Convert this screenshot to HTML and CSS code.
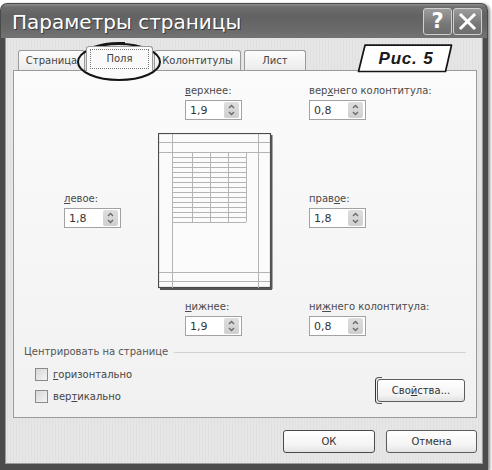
FILE: index.html
```html
<!DOCTYPE html>
<html lang="ru">
<head>
<meta charset="utf-8">
<title>Параметры страницы</title>
<link rel="stylesheet" href="styles.css">
</head>
<body>
<div class="window">
  <div class="titlebar">
    <span class="title">Параметры страницы</span>
    <div class="tb-buttons">
      <span class="tb-btn help">?</span>
      <span class="tb-btn close"><svg width="19" height="19" viewBox="0 0 19 19"><path d="M3 3 L16 16 M16 3 L3 16" stroke="#fff" stroke-width="3" stroke-linecap="square"/></svg></span>
    </div>
  </div>
  <div class="client">
    <div class="tabs">
      <div class="tab">Страница</div>
      <div class="tab active"><span class="focus">Поля</span></div>
      <div class="tab wide">Колонтитулы</div>
      <div class="tab last">Лист</div>
    </div>
    <div class="panel">
      <div class="margins">
        <div class="field f-top">
          <div class="label"><u>в</u>ерхнее:</div>
          <div class="spin"><span class="val">1,9</span><span class="arrows"><svg width="15" height="16" viewBox="0 0 15 16"><path d="M5 6 L7.5 3.5 L10 6 M5 10 L7.5 12.5 L10 10" fill="none" stroke="#6a6a6a" stroke-width="1.4"/></svg></span></div>
        </div>
        <div class="field f-header">
          <div class="label">вер<u>х</u>него колонтитула:</div>
          <div class="spin"><span class="val">0,8</span><span class="arrows"><svg width="15" height="16" viewBox="0 0 15 16"><path d="M5 6 L7.5 3.5 L10 6 M5 10 L7.5 12.5 L10 10" fill="none" stroke="#6a6a6a" stroke-width="1.4"/></svg></span></div>
        </div>
        <div class="field f-left">
          <div class="label"><u>л</u>евое:</div>
          <div class="spin"><span class="val">1,8</span><span class="arrows"><svg width="15" height="16" viewBox="0 0 15 16"><path d="M5 6 L7.5 3.5 L10 6 M5 10 L7.5 12.5 L10 10" fill="none" stroke="#6a6a6a" stroke-width="1.4"/></svg></span></div>
        </div>
        <div class="preview">
          <svg width="115" height="157" viewBox="0 0 115 157">
            <rect x="0.5" y="0.5" width="112" height="154" fill="#fbfbfb" stroke="#4a4a4a" stroke-width="1.2"/>
            <path d="M113.5 2 V156 M2 156 H114" stroke="#555" stroke-width="2"/>
            <g stroke="#b4b4b4" stroke-width="1" fill="none">
              <path d="M14.5 1 V155 M100.5 1 V155 M1 9.5 H112 M1 19.5 H112 M1 139.5 H112 M1 148.5 H112"/>
              <path d="M34.5 19 V89 M52.5 19 V89 M70.5 19 V89 M88.5 19 V89"/>
              <path d="M14 24.5 H88 M14 29.5 H88 M14 34.5 H88 M14 39.5 H88 M14 44.5 H88 M14 49.5 H88 M14 54.5 H88 M14 59.5 H88 M14 64.5 H88 M14 69.5 H88 M14 74.5 H88 M14 79.5 H88 M14 84.5 H88 M14 89.5 H88"/>
            </g>
          </svg>
        </div>
        <div class="field f-right">
          <div class="label">прав<u>о</u>е:</div>
          <div class="spin"><span class="val">1,8</span><span class="arrows"><svg width="15" height="16" viewBox="0 0 15 16"><path d="M5 6 L7.5 3.5 L10 6 M5 10 L7.5 12.5 L10 10" fill="none" stroke="#6a6a6a" stroke-width="1.4"/></svg></span></div>
        </div>
        <div class="field f-bottom">
          <div class="label"><u>н</u>ижнее:</div>
          <div class="spin"><span class="val">1,9</span><span class="arrows"><svg width="15" height="16" viewBox="0 0 15 16"><path d="M5 6 L7.5 3.5 L10 6 M5 10 L7.5 12.5 L10 10" fill="none" stroke="#6a6a6a" stroke-width="1.4"/></svg></span></div>
        </div>
        <div class="field f-footer">
          <div class="label">ни<u>ж</u>него колонтитула:</div>
          <div class="spin"><span class="val">0,8</span><span class="arrows"><svg width="15" height="16" viewBox="0 0 15 16"><path d="M5 6 L7.5 3.5 L10 6 M5 10 L7.5 12.5 L10 10" fill="none" stroke="#6a6a6a" stroke-width="1.4"/></svg></span></div>
        </div>
      </div>
      <div class="group">
        <div class="group-title">Центрировать на странице</div>
        <div class="group-body">
          <div class="checks">
            <div class="check"><span class="box"></span><span><u>г</u>оризонтально</span></div>
            <div class="check"><span class="box"></span><span>вер<u>т</u>икально</span></div>
          </div>
          <div class="btn props">Сво<u>й</u>ства...</div>
        </div>
      </div>
    </div>
    <div class="actions">
      <div class="btn ok">ОК</div>
      <div class="btn cancel">Отмена</div>
    </div>
  </div>
  <svg class="ellipse" width="90" height="42" viewBox="0 0 90 42">
    <ellipse cx="44" cy="21" rx="41" ry="18" fill="none" stroke="#151515" stroke-width="2"/>
    <path d="M18 6 Q32 1 50 2" fill="none" stroke="#151515" stroke-width="1.8"/>
  </svg>
  <div class="fig">
    <svg width="96" height="29" viewBox="0 0 96 29">
      <path d="M8 1.2 H94.5 L88.5 27.5 H1.5 Z" fill="#fff" stroke="#151515" stroke-width="1.7" stroke-linejoin="round"/>
    </svg>
    <span class="fig-text">Рис. 5</span>
  </div>
</div>
</body>
</html>
```

FILE: styles.css
```css
* { box-sizing: border-box; }
html, body { margin: 0; padding: 0; background: #fff; }
body {
  width: 492px;
  height: 470px;
  overflow: hidden;
  font-family: "DejaVu Sans", Tahoma, sans-serif;
  font-size: 10px;
  color: #444;
}
u { text-decoration: underline; text-underline-offset: 1px; }

.window {
  position: relative;
  width: 488px;
  height: 467px;
  margin-top: 3px;
  border-radius: 7px 7px 0 0;
  box-shadow: 2px 1px 3px rgba(0,0,0,0.45);
  display: flex;
  flex-direction: column;
}

.titlebar {
  height: 35px;
  flex: none;
  display: flex;
  justify-content: space-between;
  align-items: flex-start;
  padding: 0 5px 0 11px;
  border: 1px solid #4a4a4a;
  border-bottom: none;
  border-radius: 7px 7px 0 0;
  background: linear-gradient(#8e8e8e 0, #6e6e6e 3px, #626262 12px, #6a6a6a 26px, #737373 34px);
}
.title {
  color: #fff;
  font-size: 20px;
  line-height: 30px;
  margin-top: 3px;
  text-shadow: 1px 1px 0 #3a3a3a;
}
.tb-buttons { display: flex; gap: 1px; margin-top: 4px; }
.tb-btn {
  width: 29px;
  height: 27px;
  border: 1px solid #cfcfcf;
  border-radius: 3px;
  background: linear-gradient(#9c9c9c, #777 60%, #6e6e6e);
  color: #fff;
  font: bold 21px/25px "DejaVu Sans", sans-serif;
  display: flex;
  align-items: center;
  justify-content: center;
}

.client {
  flex: 1;
  background: repeating-linear-gradient(90deg, #e6e6e6 0, #e6e6e6 2px, #e0e0e0 2px, #e0e0e0 3px);
  border: 0 solid #4c4c4c;
  border-width: 0 5px 6px 5px;
  box-shadow: inset 1px 0 0 #9a9a9a, inset -1px 0 0 #9a9a9a, inset 0 -1px 0 #9a9a9a;
}

.tabs {
  height: 32px;
  display: flex;
  align-items: flex-end;
  padding-left: 13px;
}
.tab {
  height: 20px;
  width: 67px;
  margin-right: 1px;
  border: 1px solid #9a9a9a;
  border-bottom: none;
  border-radius: 3px 3px 0 0;
  background: linear-gradient(#fdfdfd, #ebebeb);
  text-align: center;
  line-height: 19px;
  color: #444;
}
.tab.active {
  height: 25px;
  margin-bottom: -1px;
  position: relative;
  z-index: 1;
  background: #fafafa;
  padding: 2px 3px 0;
}
.tab.active .focus {
  display: block;
  height: 20px;
  line-height: 18px;
  border: 1px dotted #777;
}
.tab.wide { width: 87px; margin-right: 3px; }
.tab.last { width: 62px; }

.panel {
  margin-left: 8px;
  width: 464px;
  height: 348px;
  border: 1px solid #9a9a9a;
  background: linear-gradient(#fbfbfb, #f1f1f1);
}

.margins {
  display: grid;
  grid-template-columns: 58px 115px 1fr;
  column-gap: 36px;
  margin-top: 13px;
  padding-left: 50px;
}
.f-top { grid-column: 2; grid-row: 1; margin-left: 27px; }
.f-header { grid-column: 3; grid-row: 1; }
.f-left { grid-column: 1; grid-row: 2; align-self: center; }
.preview { grid-column: 2; grid-row: 2; margin: 13px 0 10px; height: 157px; }
.preview svg { display: block; }
.f-right { grid-column: 3; grid-row: 2; align-self: center; }
.f-bottom { grid-column: 2; grid-row: 3; margin-left: 27px; }
.f-footer { grid-column: 3; grid-row: 3; }

.label { line-height: 14px; height: 14px; margin-bottom: 2px; white-space: nowrap; color: #4a4a4a; }
.spin {
  width: 57px;
  height: 20px;
  border: 1px solid #a2a2a2;
  background: #fff;
  display: flex;
  align-items: center;
  justify-content: space-between;
  padding: 0 2px 0 4px;
}
.val { font-size: 11px; color: #333; }
.arrows {
  width: 15px;
  height: 16px;
  border-radius: 2px;
  background: linear-gradient(#dedede, #cfcfcf);
  display: flex;
}
.arrows svg { display: block; }

.group { margin: 9px 10px 0 10px; }
.group-title {
  display: flex;
  align-items: center;
  line-height: 14px;
  color: #555;
}
.group-title::after {
  content: "";
  flex: 1;
  height: 1px;
  margin-left: 6px;
  background: #d2d2d2;
}
.group-body {
  display: flex;
  justify-content: space-between;
  align-items: flex-start;
}
.checks {
  display: flex;
  flex-direction: column;
  gap: 7px;
  margin-top: 8px;
  padding-left: 11px;
}
.check {
  display: flex;
  align-items: center;
  gap: 5px;
  height: 15px;
  color: #444;
}
.box {
  width: 13px;
  height: 13px;
  border: 1px solid #8a8a8a;
  background: linear-gradient(135deg, #d8d8d8, #f4f4f4);
}

.btn {
  border: 1px solid #5c5c5c;
  border-radius: 3px;
  background: linear-gradient(#ffffff, #f3f3f3 70%, #e2e2e2);
  color: #333;
  text-align: center;
  height: 23px;
  line-height: 21px;
}
.props {
  position: relative;
  width: 88px;
  margin-top: 20px;
  margin-right: 1px;
}
.props::before {
  content: "";
  position: absolute;
  left: -3px;
  top: -3px;
  width: 6px;
  height: 25px;
  border-left: 1.5px solid #333;
  border-top: 1px solid #555;
  border-bottom: 1px solid #555;
  border-radius: 4px 0 0 4px;
}

.actions {
  display: flex;
  justify-content: flex-end;
  gap: 11px;
  margin-top: 12px;
  padding-right: 6px;
}
.ok { width: 92px; border-color: #4a4a4a; }
.cancel { width: 91px; }

.ellipse { position: absolute; left: 75px; top: 38px; }
.fig {
  position: absolute;
  left: 357px;
  top: 41px;
  width: 96px;
  height: 29px;
}
.fig svg { position: absolute; left: 0; top: 0; }
.fig-text {
  position: relative;
  display: block;
  text-align: center;
  margin-left: 2px;
  font: italic bold 17px/29px "Liberation Sans", Arial, sans-serif;
  letter-spacing: 0.8px;
  color: #1a1a1a;
}
```
